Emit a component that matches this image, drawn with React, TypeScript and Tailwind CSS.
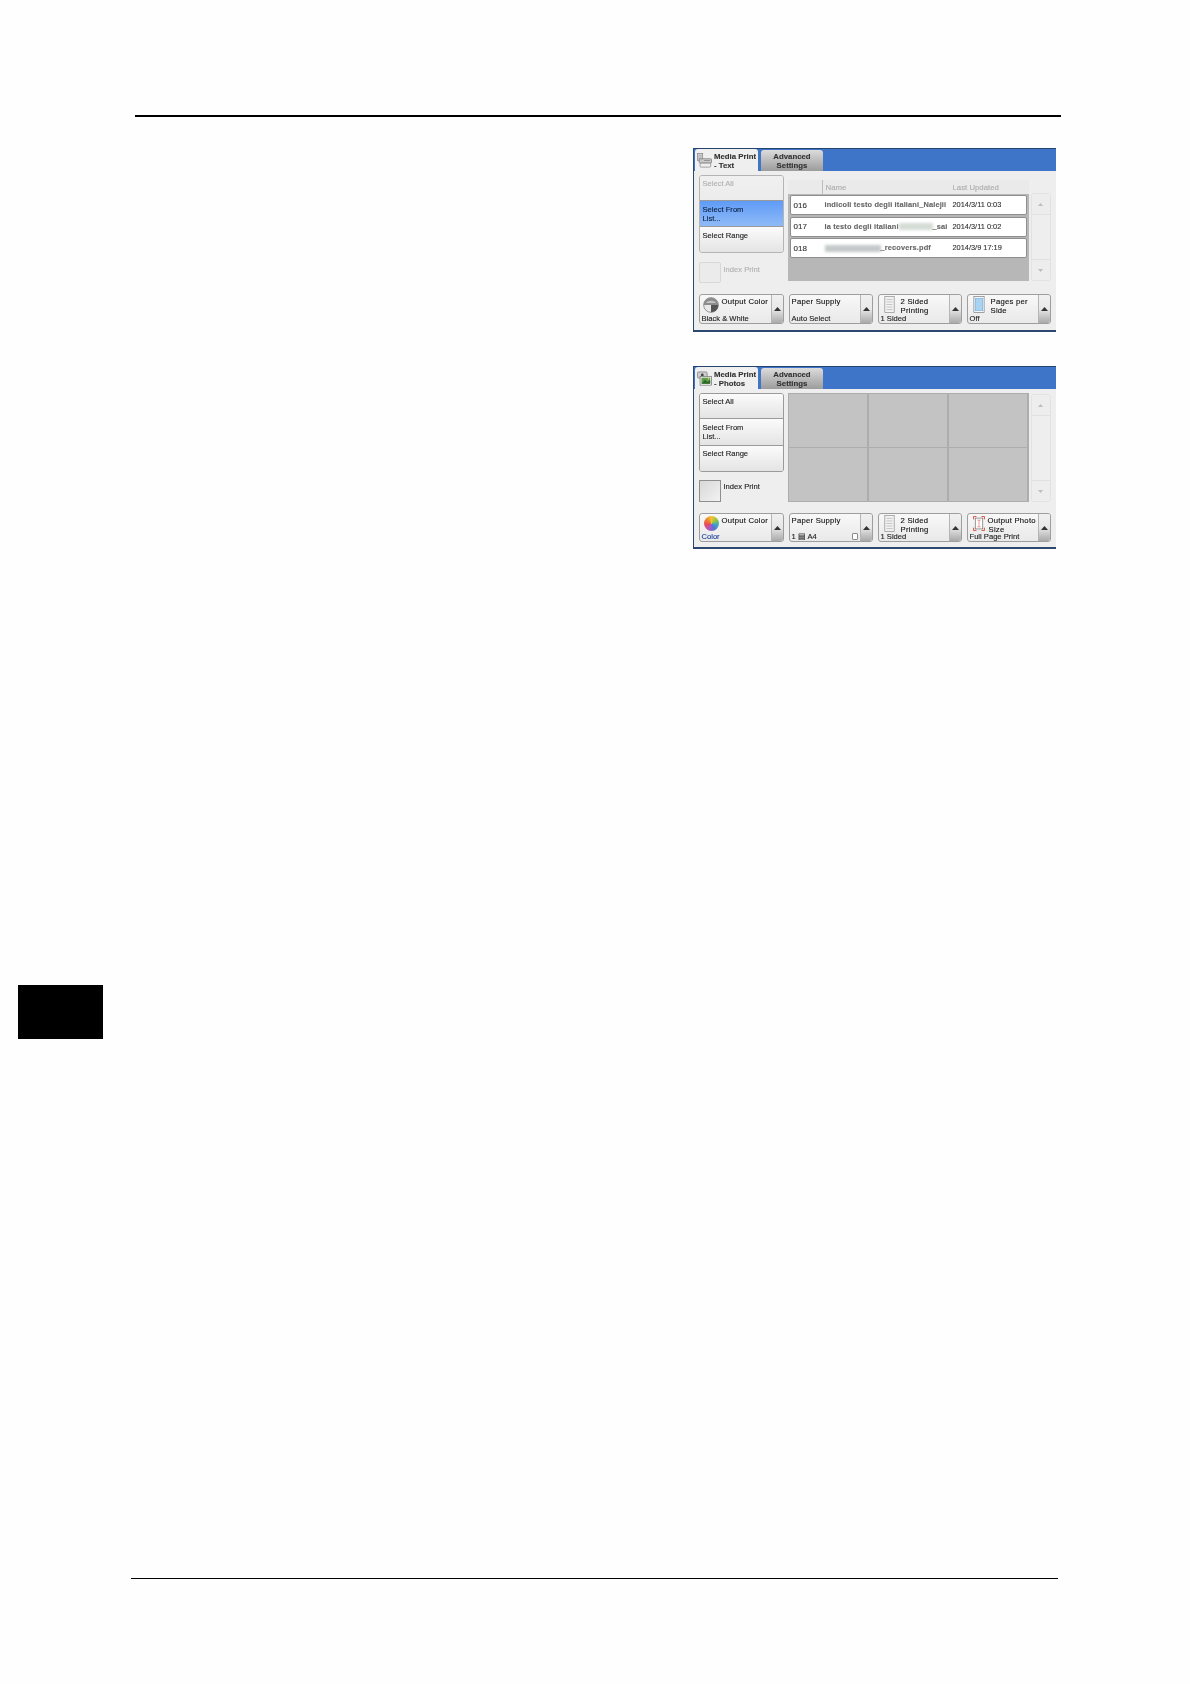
import type { ReactNode } from 'react'

const font = { fontFamily: '"Liberation Sans", Arial, sans-serif' }

function Triangle({ dir = 'up', color = '#333', small }: { dir?: 'up' | 'down'; color?: string; small?: boolean }) {
  return (
    <svg width={small ? 5 : 7} height={small ? 3 : 4} viewBox="0 0 7 4">
      <path d={dir === 'up' ? 'M3.5 0L7 4H0Z' : 'M0 0H7L3.5 4Z'} fill={color} />
    </svg>
  )
}

function PrinterIcon() {
  return (
    <svg width="15" height="15" viewBox="0 0 17 17" className="shrink-0">
      <rect x="0.5" y="0.5" width="6" height="8" fill="#d8d8d8" stroke="#777" strokeWidth="0.7" />
      <path d="M1.5 2.5H5.5M1.5 4.5H5.5M1.5 6.5H5.5" stroke="#888" strokeWidth="0.6" />
      <rect x="2.5" y="6.5" width="14" height="5" rx="1" fill="#c9c9c9" stroke="#666" strokeWidth="0.7" />
      <rect x="3.5" y="11.5" width="12" height="4.5" rx="1" fill="#eee" stroke="#777" strokeWidth="0.7" />
      <path d="M8 8.5H15" stroke="#777" strokeWidth="0.7" />
    </svg>
  )
}

function PhotoIcon() {
  return (
    <svg width="15" height="15" viewBox="0 0 17 17" className="shrink-0">
      <rect x="0.5" y="1" width="11" height="7" rx="1.5" fill="#cfcfcf" stroke="#666" strokeWidth="0.7" />
      <circle cx="6" cy="4.5" r="1.6" fill="#444" />
      <rect x="3.5" y="6" width="13" height="10" fill="#fff" stroke="#555" strokeWidth="0.7" />
      <rect x="5" y="7.5" width="10" height="7" fill="#5f9e4a" />
      <path d="M5 14.5L9 10L12 12.5L15 10V14.5Z" fill="#2f6a2a" />
      <circle cx="13" cy="9" r="0.9" fill="#f1d96b" />
    </svg>
  )
}

function GlobeIcon() {
  return (
    <svg width="16" height="16" viewBox="0 0 17 17" className="mt-[2px] ml-[1px] shrink-0">
      <circle cx="8.5" cy="8.5" r="7.8" fill="#e9e9e9" stroke="#666" strokeWidth="0.7" />
      <path d="M0.7 8.5A7.8 7.8 0 0 1 16.3 8.5Z" fill="#8d8d8d" />
      <path d="M3 6.5A6 4 0 0 1 14 6.5Z" fill="#c4c4c4" />
      <path d="M8.5 8.5H16.3A7.8 7.8 0 0 1 8.5 16.3Z" fill="#555" />
    </svg>
  )
}

function ColorIcon() {
  return (
    <div className="mt-[2px] ml-[2px] h-[15px] w-[15px] shrink-0 rounded-full bg-[conic-gradient(#f4c430,#9ac43c,#3fa7c4,#5b6fd0,#b057c0,#e84a5f,#f08030,#f4c430)]" />
  )
}

function DocIcon() {
  return (
    <svg width="11" height="17" viewBox="0 0 12 20" className="mt-[1px] ml-[3px] shrink-0">
      <rect x="0.5" y="0.5" width="11" height="19" fill="#f2f2f2" stroke="#8a8a8a" strokeWidth="0.8" />
      <path d="M2.5 4H9.5M2.5 7H9.5M2.5 10H9.5M2.5 13H9.5M2.5 16H9.5" stroke="#b0b0b0" strokeWidth="0.8" />
    </svg>
  )
}

function PagesIcon() {
  return (
    <svg width="12" height="17" viewBox="0 0 13 20" className="mt-[1px] ml-[3px] shrink-0">
      <rect x="0.5" y="0.5" width="12" height="19" fill="#fff" stroke="#777" strokeWidth="0.8" />
      <rect x="2" y="2.5" width="9" height="15" fill="#a9d3f2" stroke="#5b9bd0" strokeWidth="0.5" />
    </svg>
  )
}

function PhotoSizeIcon() {
  return (
    <svg width="12" height="15" viewBox="0 0 14 18" className="mt-[2px] ml-[3px] shrink-0">
      <rect x="2.5" y="2.5" width="9" height="13" fill="#fff" stroke="#666" strokeWidth="0.8" />
      <path d="M0.5 4V0.5H4M10 0.5H13.5V4M0.5 14V17.5H4M10 17.5H13.5V14" fill="none" stroke="#e0503c" strokeWidth="1.2" />
      <path d="M5 5H9M7 5V13M5 13H9" stroke="#d9705f" strokeWidth="0.8" />
    </svg>
  )
}

function Tab({ active, icon, children }: { active?: boolean; icon?: ReactNode; children: ReactNode }) {
  return (
    <div
      className={
        active
          ? 'flex h-[23px] w-[63px] items-center gap-[2px] rounded-t-[3px] bg-[#efefef] pl-[2px] text-[7.8px] leading-[9px] font-bold whitespace-nowrap text-[#333]'
          : 'mt-[1px] flex h-[21px] w-[62px] items-center justify-center rounded-t-[3px] bg-gradient-to-b from-[#dcdcdc] to-[#9c9c9c] text-center text-[7.8px] leading-[9px] font-bold text-[#333]'
      }
    >
      {icon}
      <div>{children}</div>
    </div>
  )
}

function SideButton({ label, state }: { label: ReactNode; state?: 'active' | 'disabled' }) {
  let cls = 'from-[#fbfbfb] to-[#e4e4e4] text-[#222]'
  if (state === 'active') cls = 'from-[#5f9bf6] to-[#8fbaf7] text-[#0c1f40]'
  if (state === 'disabled') cls = 'from-[#f0f0f0] to-[#ececec] text-[#b0b0b0]'
  return (
    <div className={`h-[26px] flex-1 border-b border-[#9a9a9a] bg-gradient-to-b px-[3px] pt-[2.5px] text-[7.6px] leading-[9px] last:border-b-0 not-first:pt-[3.5px] ${cls}`}>
      {label}
    </div>
  )
}

function ScrollColumn({ className }: { className: string }) {
  return (
    <div className={`flex w-[20px] flex-col rounded-[3px] border border-[#e2e2e2] ${className}`}>
      <div className="flex h-[21px] items-center justify-center border-b border-[#e0e0e0] bg-[#ededed]">
        <Triangle small color="#bdbdbd" />
      </div>
      <div className="flex-1 bg-[#eeeeee]" />
      <div className="flex h-[21px] items-center justify-center border-t border-[#e0e0e0] bg-[#ededed]">
        <Triangle small dir="down" color="#bdbdbd" />
      </div>
    </div>
  )
}

function OptionButton({
  title,
  value,
  icon,
  valueClass,
  extra,
  w,
}: {
  title: ReactNode
  value: ReactNode
  icon?: ReactNode
  valueClass?: string
  extra?: ReactNode
  w: string
}) {
  return (
    <div className={`flex h-full rounded-[3px] border border-[#9e9e9e] bg-gradient-to-b from-[#f8f8f8] to-[#e9e9e9] ${w}`}>
      <div className="relative min-w-0 flex-1 px-[2px]">
        <div className="flex gap-[3px]">
          {icon}
          <div className="pt-[1.5px] text-[7.7px] leading-[9px] tracking-[0.25px] whitespace-nowrap text-[#111]">{title}</div>
        </div>
        <div className={`absolute bottom-[0.5px] left-[2px] text-[7.6px] leading-[9px] whitespace-nowrap ${valueClass ?? 'text-[#222]'}`}>{value}</div>
        {extra}
      </div>
      <div className="flex w-[12px] shrink-0 items-center justify-center rounded-r-[3px] border-l border-[#b5b5b5] bg-gradient-to-b from-[#f0f0f0] via-[#e8e8e8] to-[#a9a9a9]">
        <Triangle />
      </div>
    </div>
  )
}

function Row({ num, name, date }: { num: string; name: ReactNode; date: string }) {
  return (
    <div className="grid h-[20px] grid-cols-[31px_128px_1fr] items-center rounded-[2px] border border-[#8f8f8f] bg-white pl-[3px] text-[7.4px] text-[#333]">
      <span className="pt-[1px] text-[8px]">{num}</span>
      <span className="whitespace-nowrap">{name}</span>
      <span>{date}</span>
    </div>
  )
}

function Blurred({ children }: { children: ReactNode }) {
  return <span className="inline-block font-bold tracking-[0.15px] text-[#666] blur-[0.7px]">{children}</span>
}

function Patch({ w, color }: { w: string; color: string }) {
  return <span className={`inline-block h-[7px] align-middle blur-[1.5px] ${w} ${color}`} />
}

function Panel({
  height,
  tab,
  tabIcon,
  main,
  bottom,
  bottomH,
}: {
  height: string
  tab: ReactNode
  tabIcon: ReactNode
  main: ReactNode
  bottom: ReactNode
  bottomH: string
}) {
  return (
    <div className={`ml-[693px] flex w-[363px] flex-col border-b-2 border-l-[1.5px] border-[#2d4870] bg-[#eeeeee] blur-[0.25px] [-webkit-text-stroke:0.12px_currentColor] ${height}`} style={font}>
      <div className="flex h-[23px] shrink-0 items-start gap-[3px] border-t border-[#24436e] bg-[#3f75c8] pl-[1px]">
        <Tab active icon={tabIcon}>{tab}</Tab>
        <Tab>
          Advanced
          <br />
          Settings
        </Tab>
      </div>
      <div className="flex flex-1 flex-col pt-[4px] pr-[5px] pl-[4.5px]">
        {main}
        <div className={`mt-[11px] flex gap-[5px] ${bottomH}`}>{bottom}</div>
      </div>
    </div>
  )
}

export default function App() {
  return (
    <div className="relative h-[1684px] w-[1190px] overflow-hidden bg-[#fefefe]">
      <div className="mt-[115px] ml-[135px] h-[1.5px] w-[926px] bg-black" />

      <div className="h-[31.5px]" />
      <Panel
        height="h-[184px]"
        tab={
          <>
            Media Print
            <br />- Text
          </>
        }
        tabIcon={<PrinterIcon />}
        bottomH="h-[30px]"
        main={
          <div className="flex h-[108px] items-start">
            <div className="flex w-[85px] shrink-0 flex-col">
              <div className="flex h-[78px] flex-col overflow-hidden rounded-[3px] border border-[#b4b4b4]">
                <SideButton label="Select All" state="disabled" />
                <SideButton
                  state="active"
                  label={
                    <>
                      Select From
                      <br />
                      List...
                    </>
                  }
                />
                <SideButton label="Select Range" />
              </div>
              <div className="mt-[9px] flex items-start gap-[3px]">
                <div className="h-[21px] w-[22px] rounded-[2px] border border-[#d8d8d8] bg-[#ebebeb]" />
                <span className="mt-[3px] text-[7.6px] leading-[9px] text-[#b0b0b0]">Index Print</span>
              </div>
            </div>
            <div className="mt-[5px] ml-[4px] w-[241px]">
              <div className="grid h-[14px] grid-cols-[34px_131px_1fr] items-center rounded-t-[3px] bg-[#eaeaea] text-[7.8px] leading-[9px] text-[#adadad]">
                <span className="h-full" />
                <span className="flex h-full items-center border-l border-[#bdbdbd] pl-[3px]">Name</span>
                <span>Last Updated</span>
              </div>
              <div className="flex h-[87px] flex-col gap-[1.5px] bg-[#b7b7b7] px-[2px] pt-[1px]">
                <Row num="016" date="2014/3/11 0:03" name={<Blurred>indicoli testo degli italiani_Nalejii</Blurred>} />
                <Row
                  num="017"
                  date="2014/3/11 0:02"
                  name={
                    <>
                      <Blurred>la testo degli italiani</Blurred>
                      <Patch w="w-[34px]" color="bg-[#d5dbd5]" />
                      <Blurred>_sai</Blurred>
                    </>
                  }
                />
                <Row
                  num="018"
                  date="2014/3/9 17:19"
                  name={
                    <>
                      <Patch w="w-[56px]" color="bg-[#c4c8c8]" />
                      <Blurred>_recovers.pdf</Blurred>
                    </>
                  }
                />
              </div>
            </div>
            <ScrollColumn className="mt-[18px] ml-[2px] h-[88px]" />
          </div>
        }
        bottom={
          <>
            <OptionButton w="w-[85px]" title="Output Color" value="Black & White" icon={<GlobeIcon />} />
            <OptionButton w="w-[84px]" title="Paper Supply" value="Auto Select" />
            <OptionButton
              w="w-[84px]"
              title={
                <div className="pl-[3px]">
                  2 Sided
                  <br />
                  Printing
                </div>
              }
              value="1 Sided"
              icon={<DocIcon />}
            />
            <OptionButton
              w="w-[84px]"
              title={
                <div className="pl-[3px]">
                  Pages per
                  <br />
                  Side
                </div>
              }
              value="Off"
              icon={<PagesIcon />}
            />
          </>
        }
      />

      <div className="h-[34px]" />
      <Panel
        height="h-[183px]"
        tab={
          <>
            Media Print
            <br />- Photos
          </>
        }
        tabIcon={<PhotoIcon />}
        bottomH="h-[29px]"
        main={
          <div className="flex h-[109px] items-start">
            <div className="flex w-[85px] shrink-0 flex-col">
              <div className="flex h-[79px] flex-col overflow-hidden rounded-[3px] border border-[#9a9a9a]">
                <SideButton label="Select All" />
                <SideButton
                  label={
                    <>
                      Select From
                      <br />
                      List...
                    </>
                  }
                />
                <SideButton label="Select Range" />
              </div>
              <div className="mt-[8px] flex items-start gap-[3px]">
                <div className="h-[22px] w-[22px] border border-[#8f8f8f] bg-gradient-to-br from-[#d8d8d8] to-[#f2f2f2]" />
                <span className="mt-[2px] text-[7.6px] leading-[9px] text-[#222]">Index Print</span>
              </div>
            </div>
            <div className="ml-[4px] grid h-[109px] w-[241px] grid-cols-3 grid-rows-2 gap-[1.5px] bg-[#adadad] p-[1px]">
              {[0, 1, 2, 3, 4, 5].map((i) => (
                <div key={i} className="bg-[#c3c3c3]" />
              ))}
            </div>
            <ScrollColumn className="mt-[1px] ml-[2px] h-[108px]" />
          </div>
        }
        bottom={
          <>
            <OptionButton w="w-[85px]" title="Output Color" value="Color" valueClass="text-[#1e3f9a]" icon={<ColorIcon />} />
            <OptionButton
              w="w-[84px]"
              title="Paper Supply"
              value={<span>1 ▤ A4</span>}
              extra={<div className="absolute right-[2px] bottom-[1px] h-[7px] w-[6px] rounded-[1px] border border-[#8a8a8a] bg-white" />}
            />
            <OptionButton
              w="w-[84px]"
              title={
                <div className="pl-[3px]">
                  2 Sided
                  <br />
                  Printing
                </div>
              }
              value="1 Sided"
              icon={<DocIcon />}
            />
            <OptionButton
              w="w-[84px]"
              title={
                <>
                  Output Photo
                  <br />
                  <span className="pl-[1px]">Size</span>
                </>
              }
              value="Full Page Print"
              icon={<PhotoSizeIcon />}
            />
          </>
        }
      />

      <div className="mt-[436px] ml-[18px] h-[54px] w-[85px] bg-black" />
      <div className="mt-[538.5px] ml-[131px] h-[1.5px] w-[927px] bg-black" />
    </div>
  )
}
